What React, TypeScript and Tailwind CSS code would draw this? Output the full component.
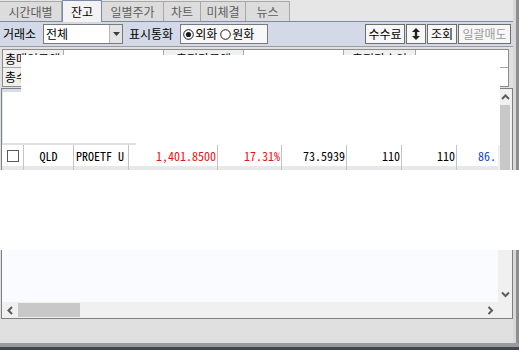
import React from 'react';

type Tab = { label: string; w: string; active?: boolean };

const tabs: Tab[] = [
  { label: '시간대별', w: 'w-[62px]' },
  { label: '잔고', w: 'w-[40px]', active: true },
  { label: '일별주가', w: 'w-[62px]' },
  { label: '차트', w: 'w-[37px]' },
  { label: '미체결', w: 'w-[45px]' },
  { label: '뉴스', w: 'w-[44px]' },
];

type Row = {
  code: string;
  name: string;
  price: string;
  rate: string;
  avg: string;
  qty: string;
  sellable: string;
  last: string;
  bg: string;
};

const rows: Row[] = [
  {
    code: 'QLD',
    name: 'PROETF U',
    price: '1,401.8500',
    rate: '17.31%',
    avg: '73.5939',
    qty: '110',
    sellable: '110',
    last: '86.',
    bg: 'bg-white',
  },
  {
    code: 'SSOX',
    name: 'ULTRAPRO',
    price: '1,744.1887',
    rate: '16.52%',
    avg: '147.2000',
    qty: '110',
    sellable: '110',
    last: '133.',
    bg: 'bg-[#e8e8e8]',
  },
];

const MONO = "font-['Noto_Sans_Mono_CJK_KR','Liberation_Mono',monospace]";

function Chevron({ dir }: { dir: 'up' | 'down' | 'left' | 'right' }) {
  const pts = {
    up: '1,6 4.5,2.5 8,6',
    down: '1,2.5 4.5,6 8,2.5',
    left: '6,1 2.5,4.5 6,8',
    right: '2.5,1 6,4.5 2.5,8',
  }[dir];
  return (
    <svg width="9" height="9" viewBox="0 0 9 9">
      <polyline points={pts} fill="none" stroke="#5c5c5c" strokeWidth="2" />
    </svg>
  );
}

function Radio({ on }: { on?: boolean }) {
  return (
    <svg width="11" height="11" viewBox="0 0 11 11" className="shrink-0">
      <circle cx="5.5" cy="5.5" r="4.8" fill="white" stroke="#1a1a1a" strokeWidth="1" />
      {on && <circle cx="5.5" cy="5.5" r="2.6" fill="#1a1a1a" />}
    </svg>
  );
}

function ToolButton({ children, w, dim }: { children: React.ReactNode; w: string; dim?: boolean }) {
  return (
    <div
      className={`${w} h-[20px] flex items-center justify-center border border-[#6e6e6e] bg-[#f7f7f7] ${
        dim ? 'text-[#9a9a9a]' : 'text-black'
      }`}
    >
      {children}
    </div>
  );
}

function DataRow({ r }: { r: Row }) {
  return (
    <div className={`h-[21px] flex items-center ${r.bg} ${MONO} text-[12px] leading-none shrink-0`}>
      <div className="w-[22px] h-full flex items-center pl-[5px] border-r border-[#c4c4c4] shrink-0">
        <div className="w-[12px] h-[12px] border border-[#5a5a5a] bg-white" />
      </div>
      <div className="w-[50px] h-full flex items-center justify-center border-r border-[#c4c4c4] shrink-0">
        {r.code}
      </div>
      <div className="w-[55px] h-full flex items-center pl-[2px] border-r border-[#c4c4c4] shrink-0 whitespace-nowrap">
        {r.name}
      </div>
      <div className="w-[89px] h-full flex items-center justify-end pr-[1px] border-r border-[#c4c4c4] shrink-0 text-[#ee1111]">
        {r.price}
      </div>
      <div className="w-[64px] h-full flex items-center justify-end pr-[1px] border-r border-[#c4c4c4] shrink-0 text-[#ee1111]">
        {r.rate}
      </div>
      <div className="w-[65px] h-full flex items-center justify-end pr-[1px] border-r border-[#c4c4c4] shrink-0">
        {r.avg}
      </div>
      <div className="w-[55px] h-full flex items-center justify-end pr-[1px] border-r border-[#c4c4c4] shrink-0">
        {r.qty}
      </div>
      <div className="w-[55px] h-full flex items-center justify-end pr-[1px] border-r border-[#c4c4c4] shrink-0">
        {r.sellable}
      </div>
      <div className="flex-1 h-full flex items-center justify-end pr-[2px] text-[#1046c8]">{r.last}</div>
    </div>
  );
}

export default function App() {
  return (
    <div className="w-[519px] h-[350px] relative overflow-hidden flex flex-col bg-[#e0e0e0] font-['Noto_Sans_CJK_KR','Noto_Sans',sans-serif] text-[12px] leading-none text-black">
      <div className="flex flex-1 min-h-0">
        <div className="w-[513px] flex flex-col">
          {/* tabs */}
          <div className="h-[22px] flex items-end bg-[#e6e6e6] border-b border-[#7c89a8] shrink-0">
            {tabs.map((t) =>
              t.active ? (
                <div
                  key={t.label}
                  className={`${t.w} h-[22px] -mb-px flex items-center justify-center bg-[#f3f3f3] border border-b-0 border-[#7c89a8] text-black`}
                >
                  {t.label}
                </div>
              ) : (
                <div
                  key={t.label}
                  className={`${t.w} h-[20px] flex items-center justify-center bg-[#dcdcdc] border-t border-r border-[#a8a8a8] text-[#5c5c5c]`}
                >
                  {t.label}
                </div>
              )
            )}
          </div>

          {/* toolbar */}
          <div className="h-[24px] flex items-center bg-[#d3d9e7] pl-[3px] pr-[2px] shrink-0">
            <span className="w-[40px]">거래소</span>
            <div className="w-[80px] h-[20px] flex bg-white border border-[#7a7a7a]">
              <span className="flex-1 flex items-center pl-[2px]">전체</span>
              <div className="w-[13px] flex items-center justify-center bg-[#e4e4e4] border-l border-[#b4b4b4]">
                <svg width="7" height="4" viewBox="0 0 7 4">
                  <polygon points="0,0 7,0 3.5,4" fill="#3c3c3c" />
                </svg>
              </div>
            </div>
            <span className="ml-[6px]">표시통화</span>
            <div className="ml-[7px] w-[88px] h-[20px] flex items-center gap-[1px] pl-[2px] bg-[#f8f8f8] border border-[#7a7a7a]">
              <Radio on />
              <span>외화</span>
              <span className="w-[1px]" />
              <Radio />
              <span>원화</span>
            </div>
            <div className="flex-1" />
            <div className="flex gap-[1px]">
              <ToolButton w="w-[40px]">수수료</ToolButton>
              <ToolButton w="w-[20px]">
                <svg width="8" height="12" viewBox="0 0 8 12">
                  <polygon points="4,0 8,4 5.2,4 5.2,8 8,8 4,12 0,8 2.8,8 2.8,4 0,4" fill="#222" />
                </svg>
              </ToolButton>
              <ToolButton w="w-[30px]">조회</ToolButton>
              <ToolButton w="w-[53px]" dim>
                일괄매도
              </ToolButton>
            </div>
          </div>
          <div className="h-px bg-[#9c9c9c] shrink-0" />
          <div className="h-[2px] shrink-0" />

          {/* summary */}
          <div className="ml-[2px] mr-[4px] h-[38px] flex flex-col border border-[#8c8c8c] bg-white shrink-0">
            <div className="h-[18px] flex border-b border-[#a8a8a8]">
              <div className="w-[61px] flex items-center pl-[2px] bg-[#f0f0f0] border-r border-[#a8a8a8]">
                총매입금액
              </div>
              <div className={`w-[100px] flex items-center justify-end pr-[3px] border-r border-[#a8a8a8] ${MONO}`}>
                147,162,541
              </div>
              <div className="w-[80px] flex items-center justify-center bg-[#f0f0f0] border-r border-[#a8a8a8]">
                총평가금액
              </div>
              <div className={`w-[100px] flex items-center justify-end pr-[3px] border-r border-[#a8a8a8] ${MONO}`}>
                1
              </div>
              <div className="w-[72px] flex items-center justify-center bg-[#f0f0f0] border-r border-[#a8a8a8]">
                총평가손익
              </div>
              <div className={`flex-1 flex items-center justify-end pr-[12px] ${MONO}`}>175,823,540</div>
            </div>
            <div className="flex-1 flex">
              <div className="w-[61px] flex items-center pl-[2px] bg-[#f0f0f0] border-r border-[#a8a8a8]">
                총수익률
              </div>
              <div className="flex-1" />
            </div>
          </div>
          <div className="h-px shrink-0" />

          {/* grid */}
          <div className="ml-[1px] w-[512px] h-[231px] flex flex-col border border-[#808080] bg-[#fafbfe] shrink-0">
            <div className="flex-1 min-h-0 flex">
              <div className="flex-1 min-w-0 flex flex-col overflow-hidden">
                <div className="h-[56px] flex flex-col shrink-0">
                  <div className="h-[3px] bg-[#d6dcec]" />
                  <div className="flex-1 bg-white border-l border-[#dceaf8]" />
                  <div className="h-[2px] w-[134px] bg-[#e0e0e0]" />
                </div>
                {rows.map((r) => (
                  <DataRow key={r.code} r={r} />
                ))}
              </div>
              <div className="w-[14px] flex flex-col bg-[#f0f0f0]">
                <div className="h-[16px] flex items-center justify-center">
                  <Chevron dir="up" />
                </div>
                <div className="h-[95px] mx-[2px] bg-[#c8c8c8]" />
                <div className="flex-1" />
                <div className="h-[16px] flex items-center justify-center">
                  <Chevron dir="down" />
                </div>
              </div>
            </div>
            <div className="h-[16px] flex bg-[#f0f0f0] shrink-0">
              <div className="w-[16px] flex items-center justify-center">
                <Chevron dir="left" />
              </div>
              <div className="w-[62px] my-[1px] bg-[#c8c8c8]" />
              <div className="flex-1" />
              <div className="w-[16px] flex items-center justify-center">
                <Chevron dir="right" />
              </div>
              <div className="w-[14px]" />
            </div>
          </div>
          <div className="flex-1" />
        </div>
        <div className="w-[3px] bg-[#d8d8d8]" />
        <div className="w-[3px] bg-[#8e8e8e]" />
      </div>
      <div className="h-[4px] bg-[#9a9a9a] shrink-0" />
      <div className="h-[3px] bg-[#3e4652] shrink-0" />

      {/* blanked-out regions of the capture */}
      <div className="absolute left-[21px] top-[55px] w-[479px] h-[88px] bg-white" />
      <div className="absolute left-[136px] top-[143px] w-[364px] h-[2px] bg-white" />
      <div className="absolute left-0 top-[170px] w-[519px] h-[80px] bg-white" />
    </div>
  );
}
